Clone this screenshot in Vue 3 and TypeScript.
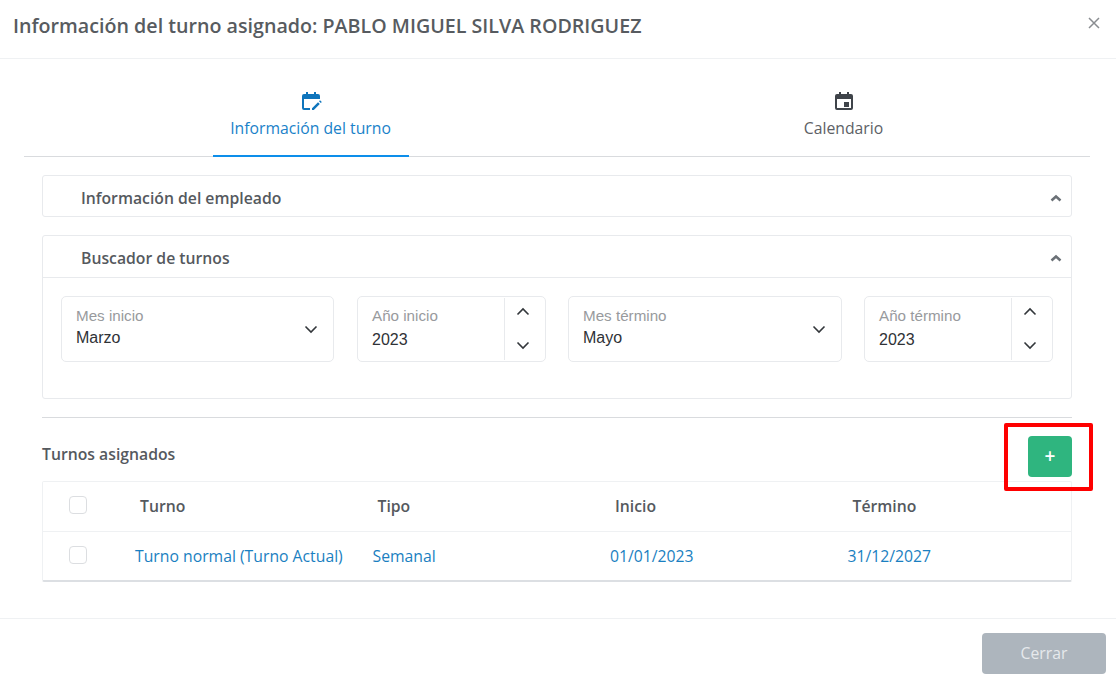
<script setup lang="ts">
interface Field { label: string; value: string; kind: 'select' | 'number' }
const fields: Field[] = [
  { label: 'Mes inicio', value: 'Marzo', kind: 'select' },
  { label: 'Año inicio', value: '2023', kind: 'number' },
  { label: 'Mes término', value: 'Mayo', kind: 'select' },
  { label: 'Año término', value: '2023', kind: 'number' },
]
const columns = ['Turno', 'Tipo', 'Inicio', 'Término']
const cells = ['Turno normal (Turno Actual)', 'Semanal', '01/01/2023', '31/12/2027']
</script>

<template>
  <div class="modal">
    <header class="head">
      <h1>Información del turno asignado: PABLO MIGUEL SILVA RODRIGUEZ</h1>
      <svg class="close" width="14" height="14" viewBox="0 0 14 14"><path d="M2 2l10 10M12 2L2 12" stroke="#8a8d91" stroke-width="1.5" fill="none"/></svg>
    </header>

    <main class="body">
      <nav class="tabs">
        <div class="tab active">
          <svg width="24" height="24" viewBox="0 0 24 24" fill="#0f75bc">
            <path d="M5 5h2V3h2v2h6V3h2v2h2a2 2 0 0 1 2 2v3H5v9h6v2H5a2 2 0 0 1-2-2V7a2 2 0 0 1 2-2z"/>
            <path d="M13 19.200V21h1.800l6-6-1.800-1.800-6 6zM20 12.200l1.800 1.800 1-1-1.800-1.800-1 1z"/>
          </svg>
          <span>Información del turno</span>
        </div>
        <div class="tab">
          <svg width="24" height="24" viewBox="0 0 24 24" fill="#3f444a">
            <path d="M5 5h2V3h2v2h6V3h2v2h2a2 2 0 0 1 2 2v12a2 2 0 0 1-2 2H5a2 2 0 0 1-2-2V7a2 2 0 0 1 2-2zm0 5v9h14v-9H5z"/>
            <rect x="12" y="13" width="5" height="5"/>
          </svg>
          <span>Calendario</span>
        </div>
      </nav>

      <section class="card first">
        <div class="card-head">
          <span>Información del empleado</span>
          <svg class="caret" width="12" height="8" viewBox="0 0 12 8"><path d="M1.500 6.500L6 2.500l4.500 4" stroke="#6b7177" stroke-width="2.500" fill="none"/></svg>
        </div>
      </section>

      <section class="card second">
        <div class="card-head ruled">
          <span>Buscador de turnos</span>
          <svg class="caret" width="12" height="8" viewBox="0 0 12 8"><path d="M1.500 6.500L6 2.500l4.500 4" stroke="#6b7177" stroke-width="2.500" fill="none"/></svg>
        </div>
        <div class="filters">
          <div v-for="f in fields" :key="f.label" class="field" :class="f.kind">
            <div class="field-text">
              <label>{{ f.label }}</label>
              <div class="val">{{ f.value }}</div>
            </div>
            <svg v-if="f.kind === 'select'" width="14" height="9" viewBox="0 0 14 9"><path d="M1.500 1.500L7 7l5.500-5.500" stroke="#33373b" stroke-width="1.600" fill="none"/></svg>
            <div v-else class="spin">
              <svg width="14" height="9" viewBox="0 0 14 9"><path d="M1.500 7.500L7 2l5.500 5.500" stroke="#33373b" stroke-width="1.600" fill="none"/></svg>
              <svg width="14" height="9" viewBox="0 0 14 9"><path d="M1.500 1.500L7 7l5.500-5.500" stroke="#33373b" stroke-width="1.600" fill="none"/></svg>
            </div>
          </div>
        </div>
      </section>

      <div class="assigned">
        <h2>Turnos asignados</h2>
        <button class="add" type="button">+</button>
        <div class="highlight"></div>
      </div>

      <div class="table">
        <div class="row top">
          <div class="cb-cell"><i class="cb"></i></div>
          <div v-for="c in columns" :key="c" class="th">{{ c }}</div>
        </div>
        <div class="row bottom">
          <div class="cb-cell"><i class="cb"></i></div>
          <div v-for="c in cells" :key="c" class="td">{{ c }}</div>
        </div>
      </div>
    </main>

    <footer class="foot">
      <button class="closebtn" type="button">Cerrar</button>
    </footer>
  </div>
</template>

<style>
html, body { margin: 0; background: #fff; overflow: hidden; }
</style>

<style scoped>
.modal {
  width: 1116px;
  height: 684px;
  display: flex;
  flex-direction: column;
  overflow: hidden;
  font-family: "Open Sans", sans-serif;
  color: #4e5257;
  background: #fff;
}
.head {
  height: 59px;
  box-sizing: border-box;
  flex: none;
  border-bottom: 1px solid #eff1f3;
  display: flex;
  align-items: center;
  justify-content: space-between;
  padding: 0 15px 8px 13px;
}
.head h1 {
  margin: 0;
  font-size: 19.660px;
  font-weight: 600;
  color: #575b60;
}
.close { margin-bottom: 5px; }
.body {
  flex: 1;
  padding: 19px 44px 0 42px;
  position: relative;
}
.tabs {
  height: 78px;
  margin: 0 -18px;
  border-bottom: 1px solid #d9dbde;
  display: flex;
  padding-left: 20px;
}
.tab {
  flex: 0 0 533px;
  display: flex;
  flex-direction: column;
  align-items: center;
  padding-top: 11px;
  box-sizing: border-box;
  position: relative;
  font-size: 15.750px;
  color: #5d6166;
  gap: 4px;
}
.tab span { line-height: 22px; }
.tab.active { color: #1a82c9; }
.tab.active::after {
  content: "";
  position: absolute;
  left: 169px;
  width: 196px;
  bottom: -1px;
  height: 2px;
  background: #0d8eea;
}
.card {
  border: 1px solid #e8eaed;
  border-radius: 3px;
  box-sizing: border-box;
  width: 1030px;
}
.first { margin-top: 18px; height: 42px; }
.second { margin-top: 18px; height: 164px; }
.card-head {
  height: 41px;
  box-sizing: border-box;
  padding: 2px 9px 0 38px;
  display: flex;
  align-items: center;
  justify-content: space-between;
  font-size: 15.750px;
  font-weight: 600;
  color: #55595e;
}
.ruled { height: 42px; border-bottom: 1px solid #e8eaed; }
.filters {
  display: grid;
  grid-template-columns: 273px 190px 274px 189px;
  column-gap: 22px;
  padding: 18px 18px 0;
}
.field {
  height: 66px;
  box-sizing: border-box;
  border: 1px solid #e8eaed;
  border-radius: 5px;
  display: flex;
  align-items: center;
  justify-content: space-between;
  padding-left: 14px;
  font-family: "Liberation Sans", Arial, sans-serif;
}
.number:nth-child(2) { margin-left: 1px; }
.select { padding-right: 15px; }
.select .field-text { padding-bottom: 3px; }
.number .field-text { padding-bottom: 2px; }
.field label {
  display: block;
  font-size: 15.200px;
  line-height: 17px;
  color: #989a9d;
}
.val {
  font-size: 16px;
  line-height: 20px;
  color: #2f3236;
}
.select .val { margin-top: 4px; }
.number .val { margin-top: 6px; }
.spin {
  align-self: stretch;
  width: 36px;
  margin: 1px 0;
  padding: 0 4px 1px 0;
  border-left: 1px solid #e8eaed;
  display: flex;
  flex-direction: column;
  align-items: center;
  justify-content: center;
  gap: 25px;
}
.assigned {
  margin-top: 18px;
  width: 1030px;
  height: 64px;
  box-sizing: border-box;
  border-top: 1px solid #d9dbde;
  position: relative;
  display: flex;
  justify-content: space-between;
  padding-top: 18px;
}
.assigned h2 {
  margin: 0;
  font-size: 15.750px;
  line-height: 37px;
  font-weight: 600;
  color: #55595e;
}
.add {
  width: 44px;
  height: 41px;
  border: 0;
  border-radius: 4px;
  background: #2fb57f;
  color: #fff;
  font-family: "Open Sans", sans-serif;
  font-size: 19px;
  line-height: 38px;
  font-weight: 600;
  padding: 0 0 2px;
}
.highlight {
  position: absolute;
  left: 962px;
  top: 5px;
  width: 89px;
  height: 68px;
  box-sizing: border-box;
  border: 4px solid #fe0000;
  border-radius: 2px;
}
.table {
  width: 1030px;
  height: 101px;
  box-sizing: border-box;
  border: 1px solid #eff1f3;
  border-bottom: 2px solid #dcdfe3;
  border-radius: 2px;
}
.row {
  display: grid;
  grid-template-columns: 93px 237.500px 237.500px 237.500px 1fr;
  align-items: center;
  font-size: 15.750px;
  box-sizing: border-box;
}
.row.top { height: 50px; border-bottom: 1px solid #eff1f3; }
.row.bottom { height: 48px; }
.cb-cell { padding: 0 0 3px 26px; display: flex; }
.cb {
  display: block;
  width: 18px;
  height: 18px;
  box-sizing: border-box;
  border: 1px solid #dcdee1;
  border-radius: 4px;
}
.th { padding: 0 0 2px 4px; font-weight: 600; color: #55595e; }
.td { color: #1a7fc1; white-space: nowrap; margin-left: -1px; }
.foot {
  height: 66px;
  flex: none;
  box-sizing: border-box;
  border-top: 1px solid #eff1f3;
  display: flex;
  justify-content: flex-end;
  padding: 14px 10px 0 0;
}
.closebtn {
  width: 124px;
  height: 41px;
  border: 0;
  border-radius: 4px;
  background: #adb5bd;
  color: #e6e9ec;
  font-family: "Open Sans", sans-serif;
  font-size: 15.750px;
  font-weight: 500;
  padding: 0 0 2px;
}
</style>
